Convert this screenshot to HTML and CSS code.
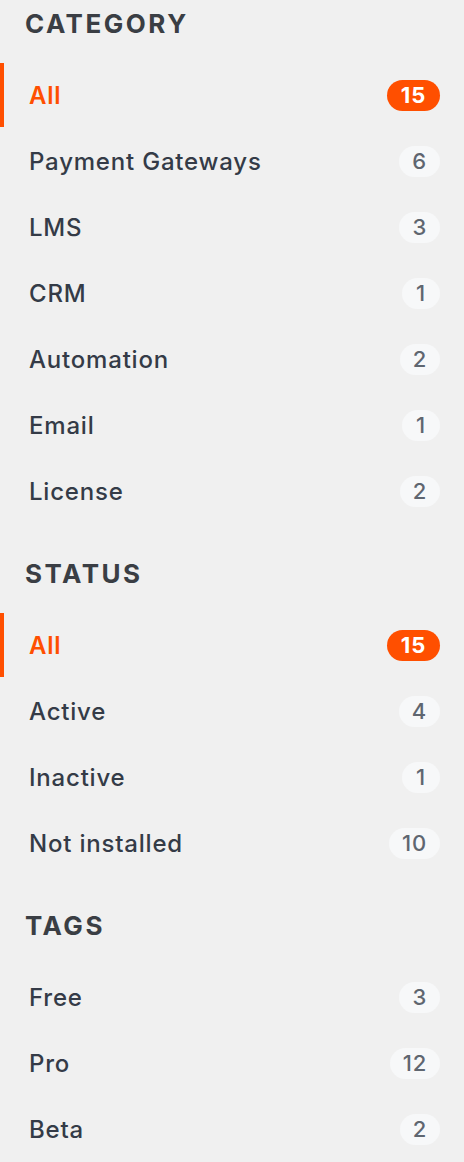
FILE: index.html
```html
<!DOCTYPE html>
<html lang="en">
<head>
<meta charset="utf-8">
<title>Filters</title>
<link rel="stylesheet" href="styles.css">
</head>
<body>
<aside class="filters">
  <section class="group">
    <h2 class="group-title">CATEGORY</h2>
    <ul class="list">
      <li class="item active"><span class="label">All</span><span class="count">15</span></li>
      <li class="item"><span class="label">Payment Gateways</span><span class="count">6</span></li>
      <li class="item"><span class="label">LMS</span><span class="count">3</span></li>
      <li class="item"><span class="label">CRM</span><span class="count">1</span></li>
      <li class="item"><span class="label">Automation</span><span class="count">2</span></li>
      <li class="item"><span class="label">Email</span><span class="count">1</span></li>
      <li class="item"><span class="label">License</span><span class="count">2</span></li>
    </ul>
  </section>
  <section class="group">
    <h2 class="group-title">STATUS</h2>
    <ul class="list">
      <li class="item active"><span class="label">All</span><span class="count">15</span></li>
      <li class="item"><span class="label">Active</span><span class="count">4</span></li>
      <li class="item"><span class="label">Inactive</span><span class="count">1</span></li>
      <li class="item"><span class="label">Not installed</span><span class="count">10</span></li>
    </ul>
  </section>
  <section class="group">
    <h2 class="group-title">TAGS</h2>
    <ul class="list">
      <li class="item"><span class="label">Free</span><span class="count">3</span></li>
      <li class="item"><span class="label">Pro</span><span class="count">12</span></li>
      <li class="item"><span class="label">Beta</span><span class="count">2</span></li>
    </ul>
  </section>
</aside>
</body>
</html>
```
FILE: styles.css
```css
html, body {
  margin: 0;
  padding: 0;
  background: #f0f0f0;
}
body {
  font-family: Inter, "Noto Sans", "Liberation Sans", sans-serif;
  color: #343b47;
}
.filters {
  display: flex;
  flex-direction: column;
  gap: 35px;
  padding-top: 8px;
}
.group-title {
  margin: 0;
  padding-left: 25px;
  font-size: 26px;
  line-height: 32px;
  font-weight: 700;
  letter-spacing: 2.5px;
  color: #3a3e44;
}
.list {
  list-style: none;
  margin: 23px 0 0;
  padding: 0;
  display: flex;
  flex-direction: column;
  gap: 2px;
}
.item {
  height: 64px;
  display: flex;
  align-items: center;
  justify-content: space-between;
  padding: 0 24px 0 29px;
}
.label {
  font-size: 24px;
  font-weight: 500;
  letter-spacing: 0.8px;
  color: #343b47;
}
.count {
  min-width: 38px;
  height: 31px;
  box-sizing: border-box;
  padding: 0 13px;
  border-radius: 16px;
  background: #f7f8f9;
  color: #5f6670;
  font-size: 22px;
  font-weight: 500;
  letter-spacing: 0.8px;
  display: flex;
  align-items: center;
  justify-content: center;
}
.item.active {
  box-shadow: inset 4px 0 0 #ff4f00;
}
.item.active .label {
  color: #ff4f00;
  font-weight: 600;
}
.item.active .count {
  background: #ff4f00;
  color: #ffffff;
  font-weight: 700;
  padding: 0 14px;
}
```
